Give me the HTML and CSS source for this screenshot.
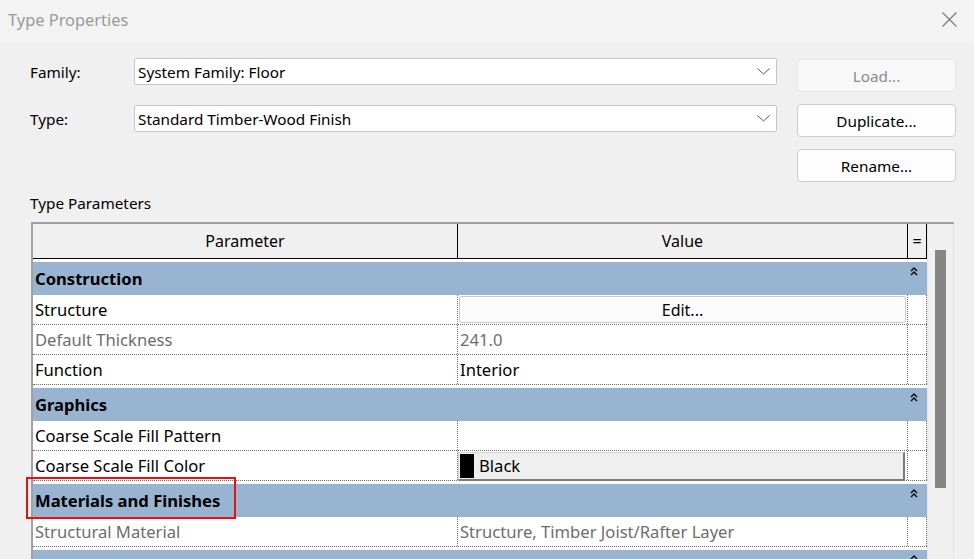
FILE: index.html
```html
<!DOCTYPE html>
<html lang="en">
<head>
  <meta charset="UTF-8">
  <title>Type Properties</title>
  <link rel="stylesheet" href="styles.css">
</head>
<body>
  <div class="dialog">
    <div class="titlebar">
      <span class="title">Type Properties</span>
      <svg class="close" width="15" height="15" viewBox="0 0 15 15"><path d="M0.5 0.5 L14.5 14.5 M14.5 0.5 L0.5 14.5" stroke="#7a7a7a" stroke-width="1.2" fill="none"/></svg>
    </div>

    <div class="top">
      <div class="fields">
        <div class="field">
          <label>Family:</label>
          <div class="combo">
            <span>System Family: Floor</span>
            <svg width="13" height="7" viewBox="0 0 13 7"><path d="M0.5 0.5 L6.5 6 L12.5 0.5" stroke="#555" stroke-width="1" fill="none"/></svg>
          </div>
        </div>
        <div class="field">
          <label>Type:</label>
          <div class="combo">
            <span>Standard Timber-Wood Finish</span>
            <svg width="13" height="7" viewBox="0 0 13 7"><path d="M0.5 0.5 L6.5 6 L12.5 0.5" stroke="#555" stroke-width="1" fill="none"/></svg>
          </div>
        </div>
      </div>
      <div class="actions">
        <button class="btn" disabled>Load...</button>
        <button class="btn">Duplicate...</button>
        <button class="btn">Rename...</button>
      </div>
    </div>

    <div class="section-label">Type Parameters</div>

    <div class="props">
      <div class="table">
        <div class="head">
          <div class="h-name">Parameter</div>
          <div class="h-val">Value</div>
          <div class="h-eq">=</div>
        </div>

        <div class="group"><span>Construction</span><svg class="collapse" width="8" height="9" viewBox="0 0 8 9"><path d="M1 4 L4 1 L7 4 M1 8 L4 5 L7 8" stroke="#000" stroke-width="1.4" fill="none"/></svg></div>
        <div class="row">
          <div class="name">Structure</div>
          <div class="val"><button class="edit">Edit...</button></div>
          <div class="eq"></div>
        </div>
        <div class="row muted">
          <div class="name">Default Thickness</div>
          <div class="val">241.0</div>
          <div class="eq"></div>
        </div>
        <div class="row">
          <div class="name">Function</div>
          <div class="val">Interior</div>
          <div class="eq"></div>
        </div>

        <div class="group"><span>Graphics</span><svg class="collapse" width="8" height="9" viewBox="0 0 8 9"><path d="M1 4 L4 1 L7 4 M1 8 L4 5 L7 8" stroke="#000" stroke-width="1.4" fill="none"/></svg></div>
        <div class="row">
          <div class="name">Coarse Scale Fill Pattern</div>
          <div class="val"></div>
          <div class="eq"></div>
        </div>
        <div class="row">
          <div class="name">Coarse Scale Fill Color</div>
          <div class="val"><button class="color"><span class="swatch"></span>Black</button></div>
          <div class="eq"></div>
        </div>

        <div class="group"><span>Materials and Finishes</span><svg class="collapse" width="8" height="9" viewBox="0 0 8 9"><path d="M1 4 L4 1 L7 4 M1 8 L4 5 L7 8" stroke="#000" stroke-width="1.4" fill="none"/></svg></div>
        <div class="row muted">
          <div class="name">Structural Material</div>
          <div class="val">Structure, Timber Joist/Rafter Layer</div>
          <div class="eq"></div>
        </div>

        <!-- next group, scrolled below the fold -->
        <div class="group"><span></span><svg class="collapse" width="8" height="9" viewBox="0 0 8 9"><path d="M1 4 L4 1 L7 4 M1 8 L4 5 L7 8" stroke="#000" stroke-width="1.4" fill="none"/></svg></div>
      </div>
      <div class="scroll"><div class="thumb"></div></div>
    </div>

    <div class="highlight"></div>
  </div>
</body>
</html>
```

FILE: styles.css
```css
* { margin: 0; padding: 0; box-sizing: border-box; }
body { background: #f0f0f0; color: #000; font-family: 'Noto Sans', 'Open Sans', sans-serif; font-size: 16.6px; width: 974px; height: 559px; overflow: hidden; }
.dialog { position: relative; height: 559px; overflow: hidden; }

/* title bar */
.titlebar { height: 42px; background: #f3f3f3; display: flex; align-items: center; justify-content: space-between; padding: 0 17px 4px 8px; }
.title { font-size: 16.4px; color: #9a9a9a; }

/* family / type pickers and buttons */
.top { display: flex; padding: 16px 0 0 30px; }
.fields { width: 747px; display: flex; flex-direction: column; gap: 20px; }
.field { display: flex; align-items: center; height: 27px; }
.field label { width: 104px; font-size: 15.3px; }
.combo { flex: 1; height: 27px; background: #fff; border: 1px solid #c6c6c6; border-radius: 2px; display: flex; align-items: center; justify-content: space-between; padding: 0 6px 0 3px; font-size: 15.3px; }
.actions { width: 159px; margin: 1px 0 0 20px; display: flex; flex-direction: column; gap: 12px; }
.btn { height: 33px; background: #fdfdfd; border: 1px solid #cccccc; border-radius: 4px; font-family: inherit; font-size: 15.3px; color: #000; }
.btn:disabled { background: #f8f8f8; border-color: #e6e6e6; color: #8d8d8d; }

.section-label { margin: 12px 0 0 30px; height: 18px; line-height: 18px; font-size: 15.3px; }

/* parameter grid */
.props { margin: 10px 0 0 31px; width: 923px; height: 337px; overflow: hidden; display: flex; border-top: 2px solid #a0a0a0; border-left: 2px solid #a0a0a0; }
.table { width: 894px; background: #fff; }
.head { display: flex; height: 35px; background: #f0f0f0; border-bottom: 1px solid #000; font-size: 16px; }
.head > div { display: flex; align-items: center; justify-content: center; }
.h-name { width: 424px; }
.h-val { width: 450px; border-left: 1px solid #000; }
.h-eq { width: 20px; border-left: 1px solid #000; border-right: 1px solid #000; }

.group { margin-top: 3px; height: 33px; background: #99b4d1; display: flex; align-items: center; justify-content: space-between; padding: 0 9px 0 2px; font-weight: 700; }
.group .collapse { align-self: flex-start; margin-top: 5px; }

.row { display: flex; height: 30px; border-bottom: 1px dotted #707070; }
.row > div { display: flex; align-items: center; }
.name { width: 424px; padding-left: 2px; }
.val { width: 450px; border-left: 1px dotted #707070; padding: 1px 0 1px 2px; }
.eq { width: 20px; border-left: 1px dotted #707070; border-right: 1px dotted #707070; }
.muted { color: #6d6d6d; }

.edit { width: 100%; height: 27px; margin-left: -1px; background: #fcfcfc; border: 1px solid #c8c8c8; border-radius: 3px; font-family: inherit; font-size: 16px; color: #000; }
.color { width: 100%; height: 29px; margin: 1px 0 0 -2px; display: flex; align-items: center; gap: 5px; padding-left: 1px; background: #efefef; border: 1px solid #d6d6d6; border-right: 2px solid #7a7a7a; border-bottom: 2px solid #7a7a7a; font-family: inherit; font-size: 16.6px; color: #000; }
.swatch { width: 14px; height: 24px; background: #000; }

.scroll { width: 27px; border-left: 1px solid #e6e6e6; border-right: 1px solid #e3e3e3; }
.thumb { width: 11px; height: 238px; margin: 26px 0 0 7px; background: #868686; }

/* red callout around the materials group */
.highlight { position: absolute; left: 26px; top: 477px; width: 210px; height: 42px; border: 2px solid #e81010; }
```
